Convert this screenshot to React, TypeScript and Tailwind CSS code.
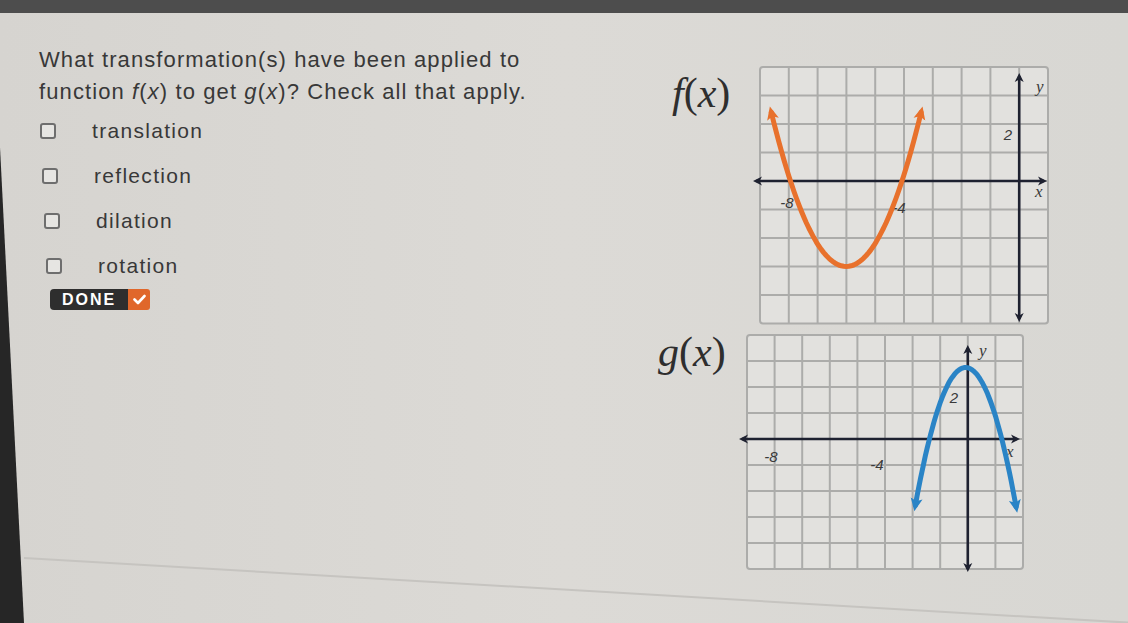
import React from "react";

type Lbl = { t: string; x: number; y: number; anchor?: "start" | "middle" | "end"; serif?: boolean };

function curvePath(
  f: (x: number) => number,
  x0: number,
  x1: number,
  px: (x: number) => number,
  py: (y: number) => number
) {
  const pts: string[] = [];
  const n = 60;
  for (let i = 0; i <= n; i++) {
    const x = x0 + ((x1 - x0) * i) / n;
    pts.push(`${i === 0 ? "M" : "L"}${px(x).toFixed(1)},${py(f(x)).toFixed(1)}`);
  }
  return pts.join(" ");
}

function Graph(props: {
  id: string;
  w: number;
  h: number;
  gx: number;
  gy: number;
  cw: number;
  ch: number;
  cols: number;
  rows: number;
  axisCol: number;
  axisRow: number;
  xAxis: [number, number];
  yAxis: [number, number];
  curve: string;
  color: string;
  labels: Lbl[];
}) {
  const { id, w, h, gx, gy, cw, ch, cols, rows, axisCol, axisRow, xAxis, yAxis, curve, color, labels } = props;
  const gw = cw * cols;
  const gh = ch * rows;
  const ax = gx + axisCol * cw;
  const ay = gy + axisRow * ch;
  const vlines = Array.from({ length: cols - 1 }, (_, i) => gx + (i + 1) * cw);
  const hlines = Array.from({ length: rows - 1 }, (_, i) => gy + (i + 1) * ch);
  return (
    <svg width={w} height={h} viewBox={`0 0 ${w} ${h}`} className="block overflow-visible">
      <defs>
        <marker id={`${id}-ad`} markerWidth="10" markerHeight="10" refX="6" refY="5" orient="auto-start-reverse" markerUnits="userSpaceOnUse">
          <path d="M0,0.5 L9,5 L0,9.5 L2.5,5 z" fill="#1e2130" />
        </marker>
        <marker id={`${id}-ac`} markerWidth="14" markerHeight="14" refX="7" refY="7" orient="auto-start-reverse" markerUnits="userSpaceOnUse">
          <path d="M0,1 L13,7 L0,13 L3,7 z" fill={color} />
        </marker>
      </defs>
      <rect x={gx} y={gy} width={gw} height={gh} rx="3" fill="#e2e1de" stroke="#acacaa" strokeWidth="2" />
      {vlines.map((x) => (
        <line key={`v${x}`} x1={x} y1={gy} x2={x} y2={gy + gh} stroke="#acacaa" strokeWidth="2" />
      ))}
      {hlines.map((y) => (
        <line key={`h${y}`} x1={gx} y1={y} x2={gx + gw} y2={y} stroke="#acacaa" strokeWidth="2" />
      ))}
      <line x1={xAxis[0]} y1={ay} x2={xAxis[1]} y2={ay} stroke="#1e2130" strokeWidth="2.6" markerStart={`url(#${id}-ad)`} markerEnd={`url(#${id}-ad)`} />
      <line x1={ax} y1={yAxis[0]} x2={ax} y2={yAxis[1]} stroke="#1e2130" strokeWidth="2.6" markerStart={`url(#${id}-ad)`} markerEnd={`url(#${id}-ad)`} />
      {labels.map((l) => (
        <text
          key={l.t + l.x}
          x={l.x}
          y={l.y}
          textAnchor={l.anchor ?? "middle"}
          fontSize={l.serif ? 17 : 15}
          fontStyle="italic"
          fontFamily={l.serif ? "'Liberation Serif', serif" : "'Liberation Sans', sans-serif"}
          fill="#3a3a3a"
        >
          {l.t}
        </text>
      ))}
      <path d={curve} fill="none" stroke={color} strokeWidth="5" strokeLinecap="round" strokeLinejoin="round" markerStart={`url(#${id}-ac)`} markerEnd={`url(#${id}-ac)`} />
    </svg>
  );
}

const fPath = curvePath(
  (x) => 0.8 * (x + 6) * (x + 6) - 3,
  -8.6,
  -3.4,
  (x) => 269 + 28.8 * x,
  (y) => 121 - 28.5 * y
);

const gPath = curvePath(
  (x) => -1.6 * (x + 0.08) * (x + 0.08) + 2.75,
  -1.9,
  1.75,
  (x) => 237.8 + 27.6 * x,
  (y) => 111 - 26 * y
);

const options = [
  { t: "translation", pl: "pl-[1px]" },
  { t: "reflection", pl: "pl-[3px]" },
  { t: "dilation", pl: "pl-[5px]" },
  { t: "rotation", pl: "pl-[7px]" },
];

export default function App() {
  return (
    <div className="relative flex h-[623px] w-full flex-col overflow-hidden bg-[#d9d7d3] font-['Liberation_Sans',Arial,sans-serif]">
      <div className="h-[13px] shrink-0 bg-[#4d4d4d]" />
      <div className="flex flex-1 bg-gradient-to-r from-[#d6d4d0] via-[#dcdad6] to-[#d8d7d3]">
        <div className="w-[24px] shrink-0 bg-[#262626] [clip-path:polygon(0_22%,100%_100%,0_100%)]" />
        <div className="w-[626px] shrink-0 pl-[15px] pt-[31px]">
          <p className="text-[22px] leading-[32px] tracking-[1.1px] text-[#383838]">
            What transformation(s) have been applied to
            <br />
            function <i>f</i>(<i>x</i>) to get <i>g</i>(<i>x</i>)? Check all that apply.
          </p>
          <div className="flex flex-col">
            {options.map((o) => (
              <div key={o.t} className={`flex h-[45px] items-center gap-[36px] ${o.pl}`}>
                <span className="h-[16px] w-[16px] rounded-[3px] border-2 border-[#6e6e6e] bg-[#e6e5e2]" />
                <span className="text-[21px] tracking-[1.3px] text-[#383838]">{o.t}</span>
              </div>
            ))}
          </div>
          <div className="ml-[11px] mt-[1px] flex h-[21px] w-fit">
            <div className="flex w-[78px] items-center justify-center rounded-l-[4px] bg-[#2e2e2e] text-[16px] font-bold tracking-[2px] text-white">
              DONE
            </div>
            <div className="flex w-[22px] items-center justify-center rounded-r-[3px] bg-[#e0672b]">
              <svg width="13" height="11" viewBox="0 0 13 11">
                <path d="M1.5,5.5 L5,9 L11.5,2" fill="none" stroke="#fff" strokeWidth="2.6" strokeLinecap="round" strokeLinejoin="round" />
              </svg>
            </div>
          </div>
        </div>
        <div className="flex flex-col pt-[47px]">
          <div className="flex">
            <div className="w-[100px] pl-[22px] pt-[12px] font-['Liberation_Serif',serif] text-[42px] leading-none text-[#2e2e2e]">
              <i>f</i>(<i>x</i>)
            </div>
            <Graph
              id="f"
              w={310}
              h={268}
              gx={10}
              gy={7}
              cw={28.8}
              ch={28.5}
              cols={10}
              rows={9}
              axisCol={9}
              axisRow={4}
              xAxis={[6, 294]}
              yAxis={[16, 259]}
              curve={fPath}
              color="#e8712c"
              labels={[
                { t: "-8", x: 37, y: 148 },
                { t: "-4", x: 149, y: 153 },
                { t: "2", x: 258, y: 80 },
                { t: "y", x: 286, y: 32, anchor: "start", serif: true },
                { t: "x", x: 285, y: 137, anchor: "start", serif: true },
              ]}
            />
          </div>
          <div className="flex">
            <div className="w-[80px] pl-[8px] pt-[3px] font-['Liberation_Serif',serif] text-[42px] leading-none text-[#2e2e2e]">
              <i>g</i>(<i>x</i>)
            </div>
            <Graph
              id="g"
              w={300}
              h={255}
              gx={17}
              gy={7}
              cw={27.6}
              ch={26}
              cols={10}
              rows={9}
              axisCol={8}
              axisRow={4}
              xAxis={[12, 287]}
              yAxis={[20, 241]}
              curve={gPath}
              color="#2a84c6"
              labels={[
                { t: "-8", x: 41, y: 134 },
                { t: "-4", x: 147, y: 142 },
                { t: "2", x: 224, y: 75 },
                { t: "y", x: 249, y: 28, anchor: "start", serif: true },
                { t: "x", x: 276, y: 129, anchor: "start", serif: true },
              ]}
            />
          </div>
        </div>
      </div>
      <div className="pointer-events-none absolute left-[24px] top-[557px] h-[2px] w-[1110px] origin-left rotate-[3.35deg] bg-[#c6c4c0]" />
    </div>
  );
}
